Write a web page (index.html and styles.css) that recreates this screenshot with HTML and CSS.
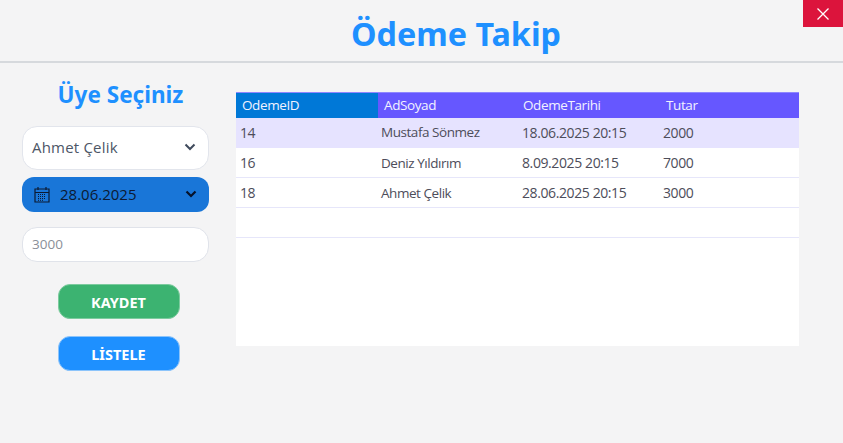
FILE: index.html
```html
<!DOCTYPE html>
<html lang="tr">
<head>
  <meta charset="UTF-8" />
  <title>Ödeme Takip</title>
  <link rel="stylesheet" href="styles.css">
</head>
<body>

<div class="window">
  <button class="close-btn" aria-label="Kapat">
    <svg width="14" height="14" viewBox="0 0 14 14"><path d="M1.5 1.5l11 11M12.5 1.5l-11 11" stroke="#fff" stroke-width="1.3" fill="none"/></svg>
  </button>

  <header class="page-header">
    <h1>Ödeme Takip</h1>
  </header>

  <main class="content">
    <aside class="side-form">
      <h2>Üye Seçiniz</h2>

      <div class="member-select">
        <span>Ahmet Çelik</span>
        <svg class="chevron" width="12" height="8" viewBox="0 0 12 8"><path d="M1.5 1.5L6 6l4.5-4.5" stroke="#3f4a5c" stroke-width="2" fill="none"/></svg>
      </div>

      <div class="date-select">
        <svg class="calendar" width="16" height="17" viewBox="0 0 16 17">
          <path d="M1 3h14v13H1zM1 6.5h14M4 1v3M12 1v3" stroke="#0d1b33" stroke-width="1.2" fill="none"/>
          <path d="M4 8.5h8M4 10.5h8M4 12.5h8M4 14.3h5" stroke="#0d1b33" stroke-width="1" stroke-dasharray="1 1" fill="none"/>
        </svg>
        <span class="date-text">28.06.2025</span>
        <svg class="chevron" width="12" height="8" viewBox="0 0 12 8"><path d="M1.5 1.5L6 6l4.5-4.5" stroke="#06122a" stroke-width="2.2" fill="none"/></svg>
      </div>

      <div class="amount-input">3000</div>

      <button class="btn btn-save">KAYDET</button>
      <button class="btn btn-list">LİSTELE</button>
    </aside>

    <section class="table-wrap">
      <table class="pay-table">
        <thead>
          <tr>
            <th class="col-id">OdemeID</th>
            <th class="col-name">AdSoyad</th>
            <th class="col-date">OdemeTarihi</th>
            <th>Tutar</th>
          </tr>
        </thead>
        <tbody>
          <tr class="selected"><td>14</td><td>Mustafa Sönmez</td><td>18.06.2025 20:15</td><td>2000</td></tr>
          <tr><td>16</td><td>Deniz Yıldırım</td><td>8.09.2025 20:15</td><td>7000</td></tr>
          <tr><td>18</td><td>Ahmet Çelik</td><td>28.06.2025 20:15</td><td>3000</td></tr>
          <tr><td></td><td></td><td></td><td></td></tr>
        </tbody>
      </table>
    </section>
  </main>
</div>

</body>
</html>
```

FILE: styles.css
```css
* {
  box-sizing: border-box;
}

html, body {
  margin: 0;
  height: 100%;
}

body {
  font-family: "Open Sans", "Noto Sans", Arial, sans-serif;
  background: #f4f4f5;
  overflow: hidden;
}

.window {
  position: relative;
  width: 843px;
  height: 443px;
}

.close-btn {
  position: absolute;
  top: 0;
  right: 0;
  width: 40px;
  height: 27px;
  padding: 0;
  border: none;
  background: #dc143c;
  display: flex;
  align-items: center;
  justify-content: center;
}

.page-header {
  height: 63px;
  border-bottom: 2px solid #d6d9dd;
  padding-top: 11px;
}

.page-header h1 {
  margin: 0;
  padding-left: 69px;
  text-align: center;
  font-family: "Noto Sans", sans-serif;
  font-size: 32.3px;
  line-height: 44px;
  font-weight: 700;
  color: #1e90ff;
}

.content {
  display: flex;
  padding: 29px 44px 0 22px;
  gap: 27px;
}

.side-form {
  width: 187px;
  display: flex;
  flex-direction: column;
  align-items: center;
}

.side-form h2 {
  margin: -13px 0 15px 10px;
  font-family: "Noto Sans", sans-serif;
  font-size: 22.5px;
  line-height: 32px;
  font-weight: 700;
  color: #1e90ff;
}

.member-select {
  width: 187px;
  height: 44px;
  padding: 0 12px 3px 9px;
  background: #fff;
  border: 1px solid #e2e5ec;
  border-radius: 15px;
  display: flex;
  align-items: center;
  justify-content: space-between;
  font-size: 15px;
  letter-spacing: 0.2px;
  color: #4d5666;
}

.date-select {
  width: 187px;
  height: 35px;
  margin-top: 7px;
  padding: 0 12px 1px;
  background: #1976d8;
  border-radius: 12px;
  display: flex;
  align-items: center;
  font-size: 15px;
  color: #0c1a33;
}

.date-text {
  margin-left: 10px;
  flex: 1;
}

.amount-input {
  width: 187px;
  height: 35px;
  margin-top: 15px;
  padding: 0 9px 1px;
  background: #fff;
  border: 1px solid #e0e3ea;
  border-radius: 15px;
  display: flex;
  align-items: center;
  font-size: 13.5px;
  color: #8a8f98;
}

.btn {
  width: 122px;
  height: 35px;
  margin-left: 6px;
  padding: 0;
  border: 1px solid transparent;
  border-radius: 12px;
  font-family: "Noto Sans", sans-serif;
  font-size: 14.5px;
  font-weight: 700;
  color: #fff;
}

.btn-save {
  margin-top: 22px;
  background: #3cb371;
  border-color: #7ccb9e;
}

.btn-list {
  margin-top: 17px;
  background: #1e90ff;
  border-color: #8cc4fb;
}

.table-wrap {
  width: 563px;
  height: 254px;
  background: #fff;
  overflow: hidden;
}

.pay-table {
  width: 100%;
  border-collapse: collapse;
  table-layout: fixed;
  font-size: 14px;
}

.pay-table th {
  height: 25px;
  padding: 0 0 1px 6px;
  text-align: left;
  font-size: 13.5px;
  letter-spacing: -0.4px;
  font-weight: 400;
  color: #f2f2ff;
  background: #6657ff;
  border-top: 1px solid #8f86ff;
}

.pay-table th.col-id {
  width: 142px;
  background: #0078d7;
}

.pay-table th.col-name {
  width: 139px;
}

.pay-table th.col-date {
  width: 143px;
}

.pay-table td {
  height: 30px;
  padding: 0 0 0 4px;
  letter-spacing: -0.4px;
  color: #4d4d5a;
  border-bottom: 1px solid #e6e6fa;
}

.pay-table td:nth-child(2) {
  padding-left: 3px;
  font-size: 13.5px;
  letter-spacing: -0.45px;
}

.pay-table td:nth-child(3) {
  padding-left: 5px;
}

.pay-table td:nth-child(4) {
  padding-left: 3px;
}

.pay-table tr.selected td {
  background: #e6e3ff;
  border-bottom-color: #e6e3ff;
}
```
